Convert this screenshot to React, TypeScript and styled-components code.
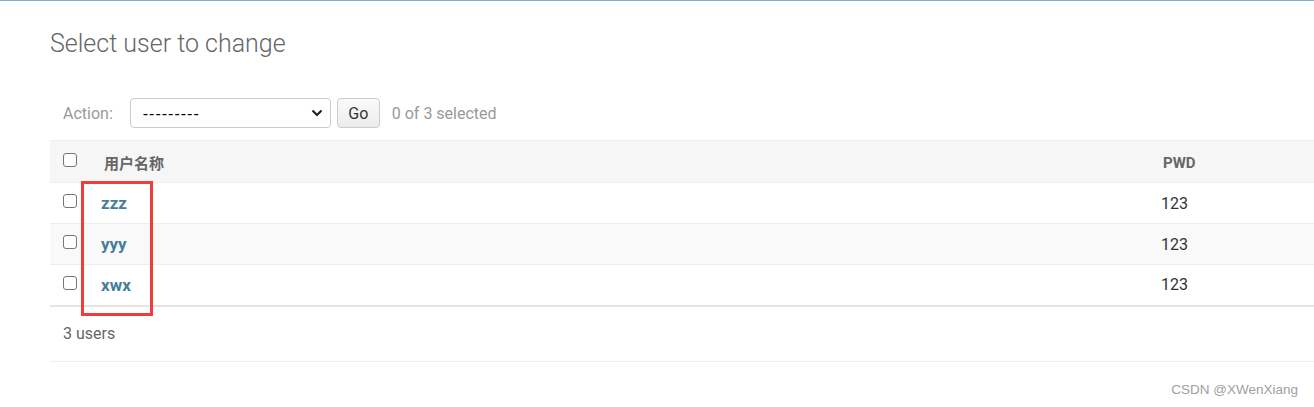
import React from "react";
import styled, { createGlobalStyle } from "styled-components";

const Global = createGlobalStyle`
  html, body { margin: 0; padding: 0; background: #fff; }
  body { font-family: Roboto, "Noto Sans CJK SC", "Liberation Sans", sans-serif; color: #333; }
`;

const Page = styled.div`
  position: relative;
  width: 1314px;
  height: 407px;
  overflow: hidden;
  border-top: 1px solid #79aec8;
  box-sizing: border-box;
`;

const Content = styled.div`
  padding: 25px 0 0 50px;
`;

const Title = styled.h1`
  margin: 0;
  font-size: 25px;
  font-weight: 300;
  color: #666;
  line-height: 36px;
  height: 36px;
`;

const ActionBar = styled.div`
  display: flex;
  align-items: center;
  height: 30px;
  margin-top: 36px;
  padding-left: 13px;
`;

const Label = styled.span`
  font-size: 16px;
  color: #999;
  margin-right: 17px;
`;

const SelectWrap = styled.div`
  position: relative;
  width: 201px;
  height: 30px;
`;

const Select = styled.select`
  appearance: none;
  width: 100%;
  height: 100%;
  box-sizing: border-box;
  border: 1px solid #ccc;
  border-radius: 4px;
  background: #fff;
  padding: 0 0 0 12px;
  font-family: "Liberation Sans", sans-serif;
  font-size: 16px;
  color: #000;
  letter-spacing: 1px;
  outline: none;
`;

const Chevron = styled.svg`
  position: absolute;
  right: 8px;
  top: 11px;
  pointer-events: none;
`;

const GoButton = styled.button`
  margin-left: 6px;
  width: 43px;
  height: 30px;
  border: 1px solid #ccc;
  border-radius: 4px;
  background: linear-gradient(#fafafa, #ececec);
  font-family: Roboto, sans-serif;
  font-size: 16px;
  color: #333;
  padding: 0;
`;

const Counter = styled.span`
  margin-left: 12px;
  font-size: 16px;
  color: #999;
`;

const Table = styled.table`
  margin-top: 12px;
  width: 1264px;
  border-collapse: collapse;
  table-layout: fixed;
`;

const HeadRow = styled.tr`
  background: #f6f6f6;
  height: 42px;
  border-top: 1px solid #eee;
`;

const Row = styled.tr<{ $alt?: boolean; $last?: boolean }>`
  background: ${(p) => (p.$alt ? "#f9f9f9" : "#fff")};
  height: 41px;
  border-top: 1px solid #eee;
  border-bottom: ${(p) => (p.$last ? "2px solid #e4e4e4" : "none")};
`;

const Cell = styled.td<{ $pad?: number; $head?: boolean }>`
  padding: 0 0 0 ${(p) => p.$pad ?? 0}px;
  vertical-align: middle;
  font-size: 16px;
  text-align: left;
  ${(p) =>
    p.$head
      ? `font-weight: 700; color: #666; font-size: 15px; padding-top: 2px;`
      : ``}
`;

const Box = styled.span`
  display: inline-block;
  width: 14px;
  height: 14px;
  box-sizing: border-box;
  border: 1px solid #767676;
  border-radius: 3px;
  background: #fff;
  vertical-align: middle;
  position: relative;
  top: -3px;
`;

const NameLink = styled.a`
  color: #447e9b;
  font-weight: 700;
  font-size: 17px;
  text-decoration: none;
`;

const Pwd = styled.span`
  color: #333;
  font-size: 16px;
`;

const Footer = styled.div`
  width: 1264px;
  height: 55px;
  line-height: 54px;
  border-bottom: 1px solid #eee;
  box-sizing: border-box;
  padding-left: 13px;
  font-size: 16px;
  color: #666;
`;

const Watermark = styled.div`
  position: absolute;
  right: 16px;
  bottom: 10px;
  font-family: "Liberation Sans", sans-serif;
  font-size: 13.5px;
  color: #a0a0a0;
`;

const Highlight = styled.div`
  position: absolute;
  left: 81px;
  top: 180px;
  width: 72px;
  height: 135px;
  box-sizing: border-box;
  border: 3px solid #f23b3b;
  pointer-events: none;
`;

const users = ["zzz", "yyy", "xwx"];

export default function App() {
  return (
    <Page>
      <Global />
      <Content>
        <Title>Select user to change</Title>
        <ActionBar>
          <Label>Action:</Label>
          <SelectWrap>
            <Select defaultValue="">
              <option value="">---------</option>
            </Select>
            <Chevron width="12" height="8" viewBox="0 0 12 8">
              <path d="M1.5 1.5 L6 6 L10.5 1.5" fill="none" stroke="#222" strokeWidth="2.2" />
            </Chevron>
          </SelectWrap>
          <GoButton>Go</GoButton>
          <Counter>0 of 3 selected</Counter>
        </ActionBar>
        <Table>
          <colgroup>
            <col style={{ width: 40 }} />
            <col style={{ width: 1058 }} />
            <col />
          </colgroup>
          <thead>
            <HeadRow>
              <Cell as="th" $pad={13}>
                <Box />
              </Cell>
              <Cell as="th" $head $pad={14}>
                用户名称
              </Cell>
              <Cell as="th" $head $pad={15}>
                PWD
              </Cell>
            </HeadRow>
          </thead>
          <tbody>
            {users.map((u, i) => (
              <Row key={u} $alt={i === 1} $last={i === users.length - 1}>
                <Cell $pad={13}>
                  <Box />
                </Cell>
                <Cell $pad={11}>
                  <NameLink href="#">{u}</NameLink>
                </Cell>
                <Cell $pad={13}>
                  <Pwd>123</Pwd>
                </Cell>
              </Row>
            ))}
          </tbody>
        </Table>
        <Footer>3 users</Footer>
      </Content>
      <Highlight />
      <Watermark>CSDN @XWenXiang</Watermark>
    </Page>
  );
}
